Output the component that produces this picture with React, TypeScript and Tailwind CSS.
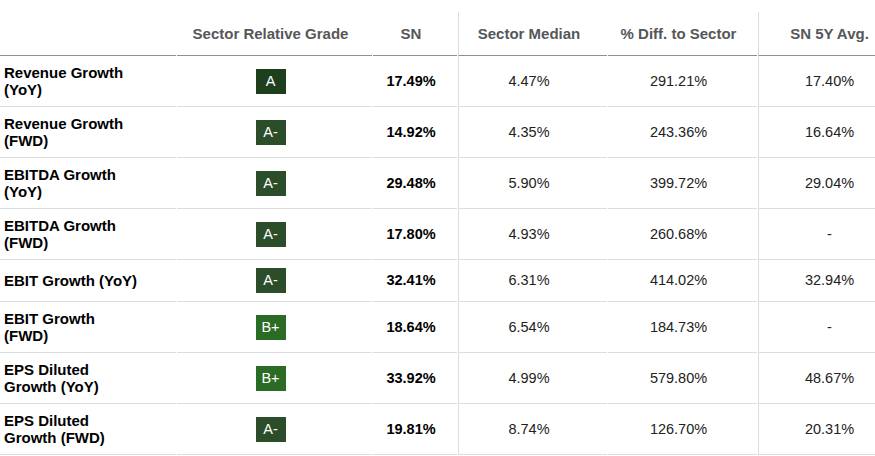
import * as React from 'react';

type Row = {
    label: string[];
    grade: string;
    sn: string;
    median: string;
    diff: string;
    avg: string;
};

const rows: Row[] = [
    { label: ['Revenue Growth', '(YoY)'], grade: 'A', sn: '17.49%', median: '4.47%', diff: '291.21%', avg: '17.40%' },
    { label: ['Revenue Growth', '(FWD)'], grade: 'A-', sn: '14.92%', median: '4.35%', diff: '243.36%', avg: '16.64%' },
    { label: ['EBITDA Growth', '(YoY)'], grade: 'A-', sn: '29.48%', median: '5.90%', diff: '399.72%', avg: '29.04%' },
    { label: ['EBITDA Growth', '(FWD)'], grade: 'A-', sn: '17.80%', median: '4.93%', diff: '260.68%', avg: '-' },
    { label: ['EBIT Growth (YoY)'], grade: 'A-', sn: '32.41%', median: '6.31%', diff: '414.02%', avg: '32.94%' },
    { label: ['EBIT Growth', '(FWD)'], grade: 'B+', sn: '18.64%', median: '6.54%', diff: '184.73%', avg: '-' },
    { label: ['EPS Diluted', 'Growth (YoY)'], grade: 'B+', sn: '33.92%', median: '4.99%', diff: '579.80%', avg: '48.67%' },
    { label: ['EPS Diluted', 'Growth (FWD)'], grade: 'A-', sn: '19.81%', median: '8.74%', diff: '126.70%', avg: '20.31%' },
];

const gradeColor: Record<string, string> = {
    A: 'bg-[#1d3f1c]',
    'A-': 'bg-[#2b4d2a]',
    'B+': 'bg-[#2a6b25]',
};

const grid =
    'grid grid-cols-[176px_195px_84px_149px_149px_150px] gap-x-px';

export default function App() {
    const head = 'flex items-center justify-center pl-1 pr-3 border-b border-[#8c8f93] font-bold text-[15px] text-[#555759]';
    const cell = 'flex items-center justify-center pl-1 pr-3 py-2 border-b border-[#dddddd]';

    return (
        <div className="h-[456px] w-[875px] overflow-hidden bg-white pt-3 font-['Liberation_Sans',Arial,sans-serif] text-[14.5px] leading-[17px] text-[#222]">
            <div className={`${grid} w-[908px]`}>
                <div className={`${head} h-[44px]`} />
                <div className={head}>Sector Relative Grade</div>
                <div className={head}>SN</div>
                <div className={`${head} border-l border-l-[#dddddd]`}>
                    Sector Median
                </div>
                <div className={head}>% Diff. to Sector</div>
                <div className={`${head} border-l border-l-[#dddddd]`}>
                    SN 5Y Avg.
                </div>

                {rows.map((r) => (
                    <React.Fragment key={r.label.join(' ')}>
                        <div className={`${cell} justify-start! flex-col items-start! min-h-[41px] pr-1`}>
                            <div className="my-auto text-[15px] font-bold text-black">
                                {r.label.map((l) => (
                                    <div key={l}>{l}</div>
                                ))}
                            </div>
                        </div>
                        <div className={cell}>
                            <span
                                className={`flex h-[25px] w-[30px] items-center justify-center text-white ${gradeColor[r.grade]}`}
                            >
                                {r.grade}
                            </span>
                        </div>
                        <div className={`${cell} font-bold text-black`}>{r.sn}</div>
                        <div className={`${cell} border-l border-l-[#dddddd]`}>
                            {r.median}
                        </div>
                        <div className={cell}>{r.diff}</div>
                        <div className={`${cell} border-l border-l-[#dddddd]`}>
                            {r.avg}
                        </div>
                    </React.Fragment>
                ))}
            </div>
        </div>
    );
}
